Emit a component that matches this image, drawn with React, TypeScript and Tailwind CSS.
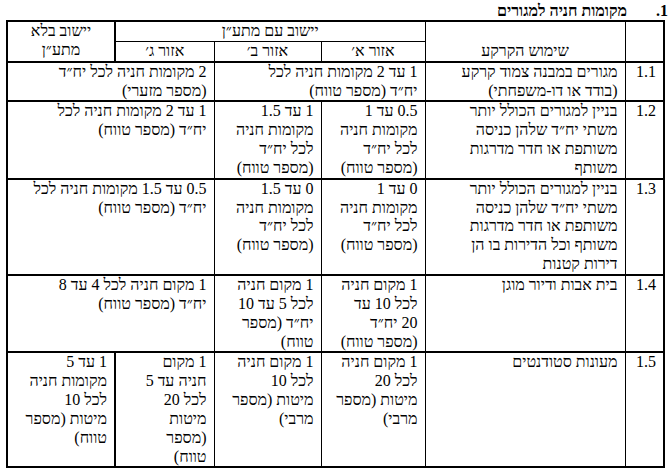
import React from 'react';

type Cell = { lines: string[]; span?: number; thickRight?: boolean };

interface Row {
  num: string;
  use: string[];
  cells: Cell[];
}

const rows: Row[] = [
  {
    num: '1.1',
    use: ['מגורים במבנה צמוד קרקע', '(בודד או דו-משפחתי)'],
    cells: [
      { lines: ['1 עד 2 מקומות חניה לכל', 'יח״ד (מספר טווח)'], span: 2 },
      { lines: ['2 מקומות חניה לכל יח״ד', '(מספר מזערי)'], span: 2 },
    ],
  },
  {
    num: '1.2',
    use: ['בניין למגורים הכולל יותר', 'משתי יח״ד שלהן כניסה', 'משותפת או חדר מדרגות', 'משותף'],
    cells: [
      { lines: ['0.5 עד 1', 'מקומות חניה', 'לכל יח״ד', '(מספר טווח)'] },
      { lines: ['1 עד 1.5', 'מקומות חניה', 'לכל יח״ד', '(מספר טווח)'] },
      { lines: ['1 עד 2 מקומות חניה לכל', 'יח״ד (מספר טווח)'], span: 2 },
    ],
  },
  {
    num: '1.3',
    use: [
      'בניין למגורים הכולל יותר',
      'משתי יח״ד שלהן כניסה',
      'משותפת או חדר מדרגות',
      'משותף וכל הדירות בו הן',
      'דירות קטנות',
    ],
    cells: [
      { lines: ['0 עד 1', 'מקומות חניה', 'לכל יח״ד', '(מספר טווח)'] },
      { lines: ['0 עד 1.5', 'מקומות חניה', 'לכל יח״ד', '(מספר טווח)'] },
      { lines: ['0.5 עד 1.5 מקומות חניה לכל', 'יח״ד (מספר טווח)'], span: 2 },
    ],
  },
  {
    num: '1.4',
    use: ['בית אבות ודיור מוגן'],
    cells: [
      { lines: ['1 מקום חניה', 'לכל 10 עד', '20 יח״ד', '(מספר טווח)'] },
      { lines: ['1 מקום חניה', 'לכל 5 עד 10', 'יח״ד (מספר', 'טווח)'] },
      { lines: ['1 מקום חניה לכל 4 עד 8', 'יח״ד (מספר טווח)'], span: 2 },
    ],
  },
  {
    num: '1.5',
    use: ['מעונות סטודנטים'],
    cells: [
      { lines: ['1 מקום חניה', 'לכל 20', 'מיטות (מספר', 'מרבי)'] },
      { lines: ['1 מקום חניה', 'לכל 10', 'מיטות (מספר', 'מרבי)'] },
      { lines: ['1 מקום', 'חניה עד 5', 'לכל 20', 'מיטות', '(מספר', 'טווח)'] },
      { lines: ['1 עד 5', 'מקומות חניה', 'לכל 10', 'מיטות (מספר', 'טווח)'], thickRight: true },
    ],
  },
];

function Lines({ lines }: { lines: string[] }) {
  return (
    <>
      {lines.map((l, i) => (
        <div key={i} className="whitespace-nowrap">
          {l}
        </div>
      ))}
    </>
  );
}

export default function App() {
  return (
    <div
      dir="rtl"
      className="w-[672px] h-[473px] bg-white text-black text-[16px] leading-[18.85px] pt-[1px]"
      style={{ fontFamily: '"Liberation Serif", "Times New Roman", serif' }}
    >
      <div className="h-[19px] flex items-start font-bold pr-[4px] leading-[19px]">
        <span className="ml-[29px]">1.</span>
        <span>מקומות חניה למגורים</span>
      </div>

      <table className="table-fixed border-collapse border-2 border-black mr-[7px] w-[657px]">
        <colgroup>
          <col className="w-[39px]" />
          <col className="w-[200px]" />
          <col className="w-[104px]" />
          <col className="w-[107px]" />
          <col className="w-[99px]" />
          <col className="w-[108px]" />
        </colgroup>
        <thead>
          <tr>
            <th rowSpan={2} className="border border-black border-b-2 font-normal p-0" />
            <th rowSpan={2} className="border border-black border-b-2 font-normal p-0 align-bottom text-center">
              שימוש הקרקע
            </th>
            <th colSpan={3} className="border border-black font-normal p-0 text-center">
              יישוב עם מתע״ן
            </th>
            <th rowSpan={2} className="border border-black border-b-2 border-r-2 font-normal p-0 text-center align-top">
              יישוב בלא
              <br />
              מתע״ן
            </th>
          </tr>
          <tr>
            <th className="border border-black border-b-2 font-normal p-0 text-center">אזור א׳</th>
            <th className="border border-black border-b-2 font-normal p-0 text-center">אזור ב׳</th>
            <th className="border border-black border-b-2 font-normal p-0 text-center">אזור ג׳</th>
          </tr>
        </thead>
        <tbody>
          {rows.map((r) => (
            <tr key={r.num}>
              <td className="border border-black border-t-2 align-top text-right px-[7px] py-0">{r.num}</td>
              <td className="border border-black border-t-2 align-top text-right px-[7px] py-0">
                <Lines lines={r.use} />
              </td>
              {r.cells.map((c, i) => (
                <td
                  key={i}
                  colSpan={c.span ?? 1}
                  className={
                    c.thickRight
                      ? 'border border-black border-t-2 border-r-2 align-top text-right px-[7px] py-0'
                      : 'border border-black border-t-2 align-top text-right px-[7px] py-0'
                  }
                >
                  <Lines lines={c.lines} />
                </td>
              ))}
            </tr>
          ))}
        </tbody>
      </table>
    </div>
  );
}
